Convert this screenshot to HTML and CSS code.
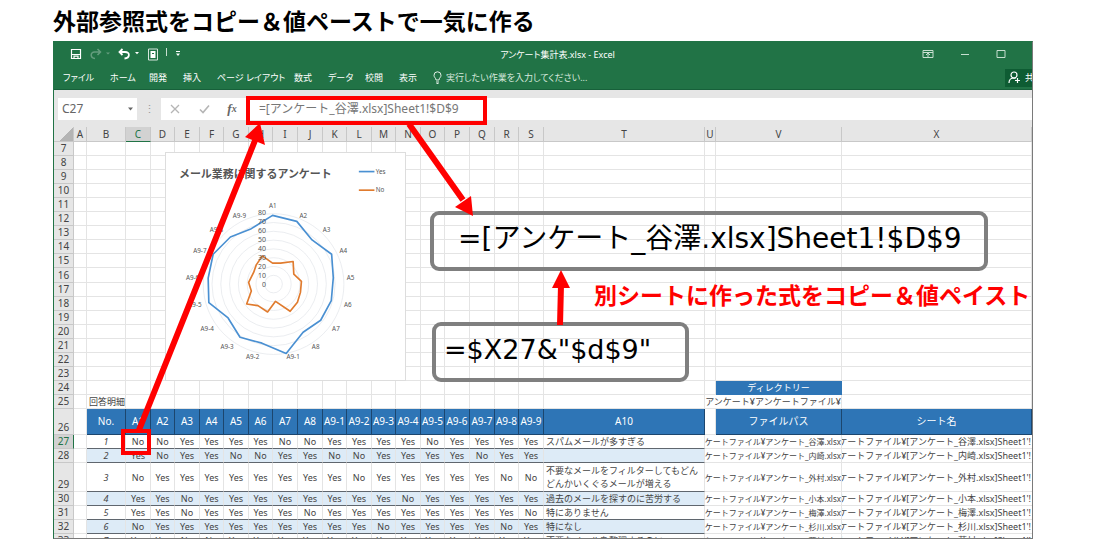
FILE: index.html
```html
<!DOCTYPE html>
<html lang="ja">
<head>
<meta charset="utf-8">
<title>外部参照式をコピー＆値ペーストで一気に作る</title>
<link rel="stylesheet" href="styles.css">
</head>
<body>
<h1 class="heading">外部参照式をコピー＆値ペーストで一気に作る</h1>
<main class="window">
  <header class="ribbon">
    <div class="titlebar">
      <div class="quick">
        <button class="icon" aria-label="保存"><svg width="12" height="12" viewBox="0 0 12 12"><path d="M1.5 1.5h9v9h-9zM2 6.5h8M4 10V8.2h4V10" fill="none" stroke="#fff" stroke-width="1.2"/></svg></button>
        <button class="icon dim" aria-label="やり直し"><svg width="20" height="12" viewBox="0 0 20 12"><path d="M7.500 1l3 3-3 3M10 4H4.500C0 4 0 10 5 10.500" fill="none" stroke="#fff" stroke-width="1.500"/><path d="M16 4.500h4l-2 2z" fill="#fff"/></svg></button>
        <button class="icon" aria-label="元に戻す"><svg width="22" height="12" viewBox="0 0 22 12"><path d="M4.500 1l-3 3 3 3M2 4h5c5.500 0 5 6-.5 6.500" fill="none" stroke="#fff" stroke-width="1.800"/><path d="M17 4h4l-2 2.300z" fill="#fff"/></svg></button>
        <button class="icon" aria-label="フォーム"><svg width="10" height="13" viewBox="0 0 10 13"><path d="M.5 1h9v11h-9z" fill="none" stroke="#d5e6dc"/><path d="M2.500 3h5v7h-5z" fill="#fff"/><path d="M4 5.500h2" stroke="#217346"/></svg></button>
        <span class="divider"></span>
        <button class="icon" aria-label="カスタマイズ"><svg width="6" height="6" viewBox="0 0 6 6"><path d="M1 .5h4" stroke="#fff"/><path d="M1 2.500h4L3 5z" fill="#fff"/></svg></button>
      </div>
      <span class="doc">アンケート集計表.xlsx - Excel</span>
      <div class="controls">
        <button class="icon" aria-label="リボンの表示"><svg width="12" height="10" viewBox="0 0 12 10"><path d="M1 1.500h10v7H1zM1 3.500h10M6 8V4.500M4 6l2-2 2 2" fill="none" stroke="#c7dfd0"/></svg></button>
        <button class="icon" aria-label="最小化"><svg width="10" height="10" viewBox="0 0 10 10"><path d="M1 5.500h8" stroke="#c7dfd0"/></svg></button>
        <button class="icon" aria-label="最大化"><svg width="10" height="10" viewBox="0 0 10 10"><path d="M1 1.500h8v7H1z" fill="none" stroke="#c7dfd0"/></svg></button>
      </div>
    </div>
    <div class="menubar">
      <nav class="tabs">
        <a href="#">ファイル</a><a href="#">ホーム</a><a href="#">開発</a><a href="#">挿入</a><a href="#">ページ レイアウト</a><a href="#">数式</a><a href="#">データ</a><a href="#">校閲</a><a href="#">表示</a>
        <a href="#" class="tell"><svg width="9" height="13" viewBox="0 0 9 13"><path d="M3 9C3 7 1 6.500 1 4.300a3.500 3.500 0 0 1 7 0C8 6.500 6 7 6 9zM3 11h3M3.500 12.500h2" fill="none" stroke="#e3f0e8"/></svg>実行したい作業を入力してください...</a>
      </nav>
      <button class="share"><svg width="13" height="13" viewBox="0 0 13 13"><circle cx="6" cy="4" r="3" fill="none" stroke="#fff" stroke-width="1.200"/><path d="M1 12c0-3 2-5 5-5l1.500.5M9.500 7v5M7 9.500h5" fill="none" stroke="#fff" stroke-width="1.200"/></svg><span>共有</span></button>
    </div>
  </header>
  <section class="formula-bar">
    <button class="namebox">C27<svg width="5" height="4" viewBox="0 0 5 4"><path d="M0 .5h5L2.500 3.500z" fill="#666"/></svg></button>
    <span class="grip">⋮</span>
    <div class="entry">
      <button class="icon" aria-label="キャンセル"><svg width="10" height="10" viewBox="0 0 10 10"><path d="M1 1l8 8M9 1L1 9" stroke="#b5b5b5" stroke-width="1.300"/></svg></button>
      <button class="icon" aria-label="入力"><svg width="11" height="10" viewBox="0 0 11 10"><path d="M1 5.500L4 8.500 10 1.500" fill="none" stroke="#b5b5b5" stroke-width="1.600"/></svg></button>
      <button class="icon fx" aria-label="関数の挿入">f<small>x</small></button>
      <input class="formula" aria-label="数式バー" value="=[アンケート_谷澤.xlsx]Sheet1!$D$9">
    </div>
  </section>
  <table class="sheet">
    <colgroup id="cols"></colgroup>
    <thead><tr id="letters"></tr></thead>
    <tbody id="rows"></tbody>
  </table>
  <figure class="chart"><svg id="radar" viewBox="16 8 720 684" role="img" aria-label="メール業務に関するアンケート"></svg></figure>
  <div class="callout result">=[アンケート_谷澤.xlsx]Sheet1!$D$9</div>
  <div class="callout source">=$X27&amp;"$d$9"</div>
  <div class="mark mark-formula"></div>
  <div class="mark mark-cell"></div>
  <svg class="arrows" width="980" height="498" viewBox="53 41 980 498" aria-hidden="true">
    <path d="M139 430L256 138M409 124l54 76M560 325l1-40" fill="none" stroke="#f00" stroke-width="6"/>
    <path d="M260 123L245 137l20 8zM473 216l-18-9 16-11zM561 270l-9 18h18z" fill="#f00"/>
  </svg>
  <p class="note">別シートに作った式をコピー＆値ペイスト</p>
</main>
<script src="sheet.js"></script>
</body>
</html>
```

FILE: styles.css
```css
* { box-sizing: border-box; }
body {
  margin: 0;
  padding: 0 67px 10px 53px;
  background: #fff;
  color: #444;
  font-family: "Noto Sans", "Noto Sans CJK JP", sans-serif;
}
button { border: 0; padding: 0; background: none; font: inherit; color: inherit; }
a { color: inherit; text-decoration: none; }
svg { display: block; }
.heading {
  margin: 0;
  font: bold 23px/40px "Noto Sans CJK JP", sans-serif;
  padding-bottom: 1px;
  color: #000;
  white-space: nowrap;
}
.window {
  position: relative;
  border: 1px solid #7a7a7a;
  border-left-color: #217346;
  border-top-color: #217346;
}
.icon { display: flex; align-items: center; justify-content: center; }

.ribbon {
  background: #217346;
  border-bottom: 1px solid #17603a;
  color: #fff;
  font-size: 9px;
  font-feature-settings: "palt";
}
.titlebar {
  display: grid;
  grid-template-columns: 11fr auto 10fr;
  align-items: center;
  height: 24px;
  padding: 0 26px 0 16px;
}
.quick { display: flex; align-items: center; gap: 8px; }
.dim { opacity: .3; }
.divider { width: 1px; height: 8px; background: #c7dfd0; align-self: flex-start; }
.controls { display: flex; justify-content: flex-end; gap: 26px; }
.menubar { display: flex; align-items: center; justify-content: space-between; height: 23px; }
.tabs {
  display: grid;
  grid-template-columns: 47px 39px 34px 34px 77px 34px 37px 34px 34px auto;
  align-items: center;
  padding-left: 9px;
  line-height: 18px;
  white-space: nowrap;
}
.tell { display: flex; align-items: center; gap: 4px; color: #d6e8dd; }
.share {
  display: flex;
  align-items: center;
  gap: 4px;
  width: 27px;
  height: 18px;
  padding-left: 3px;
  background: #0e5c33;
  overflow: hidden;
  white-space: nowrap;
}
.share svg { flex: none; }

.formula-bar {
  display: flex;
  align-items: center;
  height: 37px;
  padding-left: 4px;
  background: #e6e6e6;
  color: #666;
}
.namebox {
  display: flex;
  align-items: center;
  justify-content: space-between;
  width: 79px;
  height: 22px;
  padding: 0 4px;
  background: #fff;
  font-size: 12px;
}
.grip { width: 24px; text-align: center; font-size: 11px; color: #999; }
.entry {
  flex: 1;
  display: grid;
  grid-template-columns: 28px 30px 26px 1fr;
  height: 22px;
  background: #fff;
}
.fx { font: italic bold 13px "Liberation Serif", serif; }
.fx small { font-size: 10px; }
.formula {
  min-width: 0;
  border: 0;
  padding: 0 0 2px 14px;
  background: none;
  font: 12px "Noto Sans", "Noto Sans CJK JP", sans-serif;
  color: #777;
}

.sheet {
  width: 100%;
  table-layout: fixed;
  border-collapse: separate;
  border-spacing: 0;
  font-size: 9px;
  line-height: 13px;
  color: #444;
}
.sheet th, .sheet td {
  height: 14px;
  padding: 0;
  border-right: 1px solid #e4e4e4;
  border-bottom: 1px solid #e4e4e4;
  font-weight: normal;
  text-align: center;
  white-space: nowrap;
  overflow: hidden;
}
.w-head { width: 20px; }
.w-a { width: 13px; }
.w-b { width: 39px; }
.w-24 { width: 24px; }
.w-25 { width: 25px; }
.w-t { width: 161px; }
.w-u { width: 11px; }
.w-v { width: 126px; }
.sheet thead th {
  height: 15px;
  background: #e6e6e6;
  border-color: #c8c8c8;
  font-size: 10px;
  line-height: 14px;
}
.sheet thead .corner { background: linear-gradient(135deg, #e6e6e6 60%, #b4b4b4 60%); }
.sheet thead .current { background: #d2d2d2; color: #217346; border-bottom: 1px solid #217346; }
.sheet tbody th {
  background: #e6e6e6;
  border-color: #c8c8c8;
  font-size: 10px;
  vertical-align: bottom;
}
.sheet .tall > * { height: 15px; }
.sheet .current th { background: #d2d2d2; color: #217346; border-right-color: #217346; }
.sheet .titles > * { height: 26px; }
.sheet .double > * { height: 29px; }
.sheet .fill {
  background: #2e75b6;
  border-color: #1c466e;
  color: #fff;
  font-size: 10px;
}
.sheet .dir { font-size: 9px; border-color: #2e75b6; }
.sheet .answer { border-bottom-color: #5f666e; }
.sheet .band .answer { background: #ddebf7; }
.sheet .serial { font-style: italic; }
.sheet .comment { padding-left: 2px; text-align: left; white-space: normal; }
.sheet .label { padding-left: 2px; text-align: left; overflow: visible; }
.sheet .path, .sheet .name { direction: rtl; }
.sheet .path { font-size: 8px; }
.sheet .name { padding-right: 1px; border-right: 0; }
.sheet .clip { height: 4px; overflow: hidden; }
.sheet .last > * { height: 4px; border-bottom: 0; }

.chart {
  position: absolute;
  left: 111px;
  top: 110px;
  width: 241px;
  height: 229px;
  margin: 0;
  background: #fff;
  border: 1px solid #ddd;
}
.chart svg { width: 100%; height: 100%; }
.chart text { font-size: 19px; fill: #555; dominant-baseline: central; text-anchor: middle; }
.chart .caption { font-size: 33px; font-weight: bold; }
.chart .scale { font-size: 21px; text-anchor: end; }
.chart .key { text-anchor: start; }
.ring { fill: none; stroke: #e0e3e8; stroke-width: 2; }
.yes, .no { fill: none; stroke-width: 5; stroke-linejoin: round; }
.yes { stroke: #4a90d2; }
.no { stroke: #e07b2e; }

.callout {
  position: absolute;
  height: 60px;
  border: 4px solid #7f7f7f;
  border-radius: 9px;
  color: #000;
  font: 27px/47px "DejaVu Sans", "Noto Sans CJK JP", sans-serif;
  white-space: nowrap;
}
.result { left: 376px; top: 169px; width: 558px; padding-left: 24px; font-size: 28px; }
.source { left: 378px; top: 280px; width: 257px; padding-left: 8px; }
.mark { position: absolute; border: 4px solid #f00; }
.mark-formula { left: 192px; top: 54px; width: 241px; height: 29px; }
.mark-cell { left: 67px; top: 387px; width: 30px; height: 26px; }
.arrows { position: absolute; left: -1px; top: -1px; }
.note {
  position: absolute;
  left: 540px;
  top: 237px;
  margin: 0;
  color: #f00;
  font: bold 23px/30px "Noto Sans CJK JP", sans-serif;
  white-space: nowrap;
}
```

FILE: sheet.js
```js
const widths = ["head", "a", "b",
  "25", "24", "25", "24", "25", "24", "25", "25", "24", "25", "24", "25", "24", "25", "25", "24", "25",
  "t", "u", "v", "x"];
document.getElementById("cols").innerHTML = widths.map(w => `<col class="w-${w}">`).join("");

const letters = [..."ABCDEFGHIJKLMNOPQRSTUVX"];
document.getElementById("letters").innerHTML = `<th class="corner"></th>` +
  letters.map(l => `<th${l === "C" ? ' class="current"' : ""}>${l}</th>`).join("");

const questions = ["A1", "A2", "A3", "A4", "A5", "A6", "A7", "A8",
  "A9-1", "A9-2", "A9-3", "A9-4", "A9-5", "A9-6", "A9-7", "A9-8", "A9-9"];
const empty = n => "<td></td>".repeat(n);

let html = "";
for (let r = 7; r <= 23; r++) {
  html += `<tr${r === 16 ? ' class="tall"' : ""}><th>${r}</th>${empty(23)}</tr>`;
}
html += `<tr><th>24</th>${empty(21)}<td class="fill dir">ディレクトリー</td><td></td></tr>`;
html += `<tr><th>25</th><td></td><td class="label">回答明細</td>${empty(18)}<td colspan="2">アンケート¥アンケートファイル¥</td><td></td></tr>`;
html += `<tr class="titles"><th>26</th><td></td><td class="fill">No.</td>` +
  questions.map(q => `<td class="fill">${q}</td>`).join("") +
  `<td class="fill">A10</td><td></td><td class="fill">ファイルパス</td><td class="fill">シート名</td></tr>`;

// One letter per question: y = Yes, n = No
const answers = [
  ["nnyyyynnyyyynyyyy", "スパムメールが多すぎる", "谷澤"],
  ["ynyynnyynnyyyynyy", "", "内崎"],
  ["nyyyyyyyynyyyyynn", "不要なメールをフィルターしてもどんどんかいくぐるメールが増える", "外村"],
  ["yynyyyyyyyynyyyyy", "過去のメールを探すのに苦労する", "小本"],
  ["yynyyyynyyyyyyyyn", "特にありません", "梅澤"],
  ["nyyyyyyyyynyyyyny", "特になし", "杉川"],
  ["yynnyyyyyyyyyyyyy", "不要なメールを整理するのに", "藤村"]
];
answers.forEach(([marks, comment, file], i) => {
  const last = i === 6;
  const cut = s => last ? `<div class="clip">${s}</div>` : s;
  const kind = [i === 0 && "current", i === 2 && "double", i % 2 && "band", last && "last"].filter(Boolean).join(" ");
  html += `<tr class="${kind}"><th>${cut(27 + i)}</th><td></td><td class="answer serial">${cut(i + 1)}</td>` +
    [...marks].map(m => `<td class="answer">${cut(m === "y" ? "Yes" : "No")}</td>`).join("") +
    `<td class="answer comment">${cut(comment)}</td>` +
    `<td class="path" colspan="2">${cut(`<bdi>ケートファイル¥アンケート_${file}.xlsx</bdi>`)}</td>` +
    `<td class="name">${cut(`<bdi>ケートファイル¥[アンケート_${file}.xlsx]Sheet1'!</bdi>`)}</td></tr>`;
});
document.getElementById("rows").innerHTML = html;

const yes = "337,196 410,214 456,270 515,313 520,384 514,453 482,512 429,548 378,612 305,581 239,563 203,505 145,459 143,385 158,313 210,261 273,236";
const no = "337,340 361,340 399,335 401,373 424,395 421,428 412,458 390,485 346,455 322,487 293,468 259,463 273,424 265,398 280,368 288,345 306,318";
const spots = [[338, 165], [430, 195], [500, 238], [550, 303], [572, 382], [564, 463], [528, 537], [467, 592],
  [399, 622], [277, 622], [200, 592], [140, 537], [103, 463], [96, 382], [118, 303], [168, 238], [237, 195]];
let radar = `<text class="caption" x="285" y="70">メール業務に関するアンケート</text>`;
for (let v = 1; v <= 8; v++) radar += `<circle class="ring" cx="340" cy="403" r="${v * 26.5}"/>`;
radar += `<polygon class="yes" points="${yes}"/><polygon class="no" points="${no}"/>`;
for (let v = 0; v <= 8; v++) radar += `<text class="scale" x="317" y="${403 - v * 27}">${v * 10}</text>`;
spots.forEach(([x, y], i) => { radar += `<text x="${x}" y="${y}">${questions[i]}</text>`; });
radar += `<path class="yes" d="M597 64h47"/><text class="key" x="648" y="63">Yes</text>` +
  `<path class="no" d="M597 120h47"/><text class="key" x="648" y="119">No</text>`;
document.getElementById("radar").innerHTML = radar;
```
